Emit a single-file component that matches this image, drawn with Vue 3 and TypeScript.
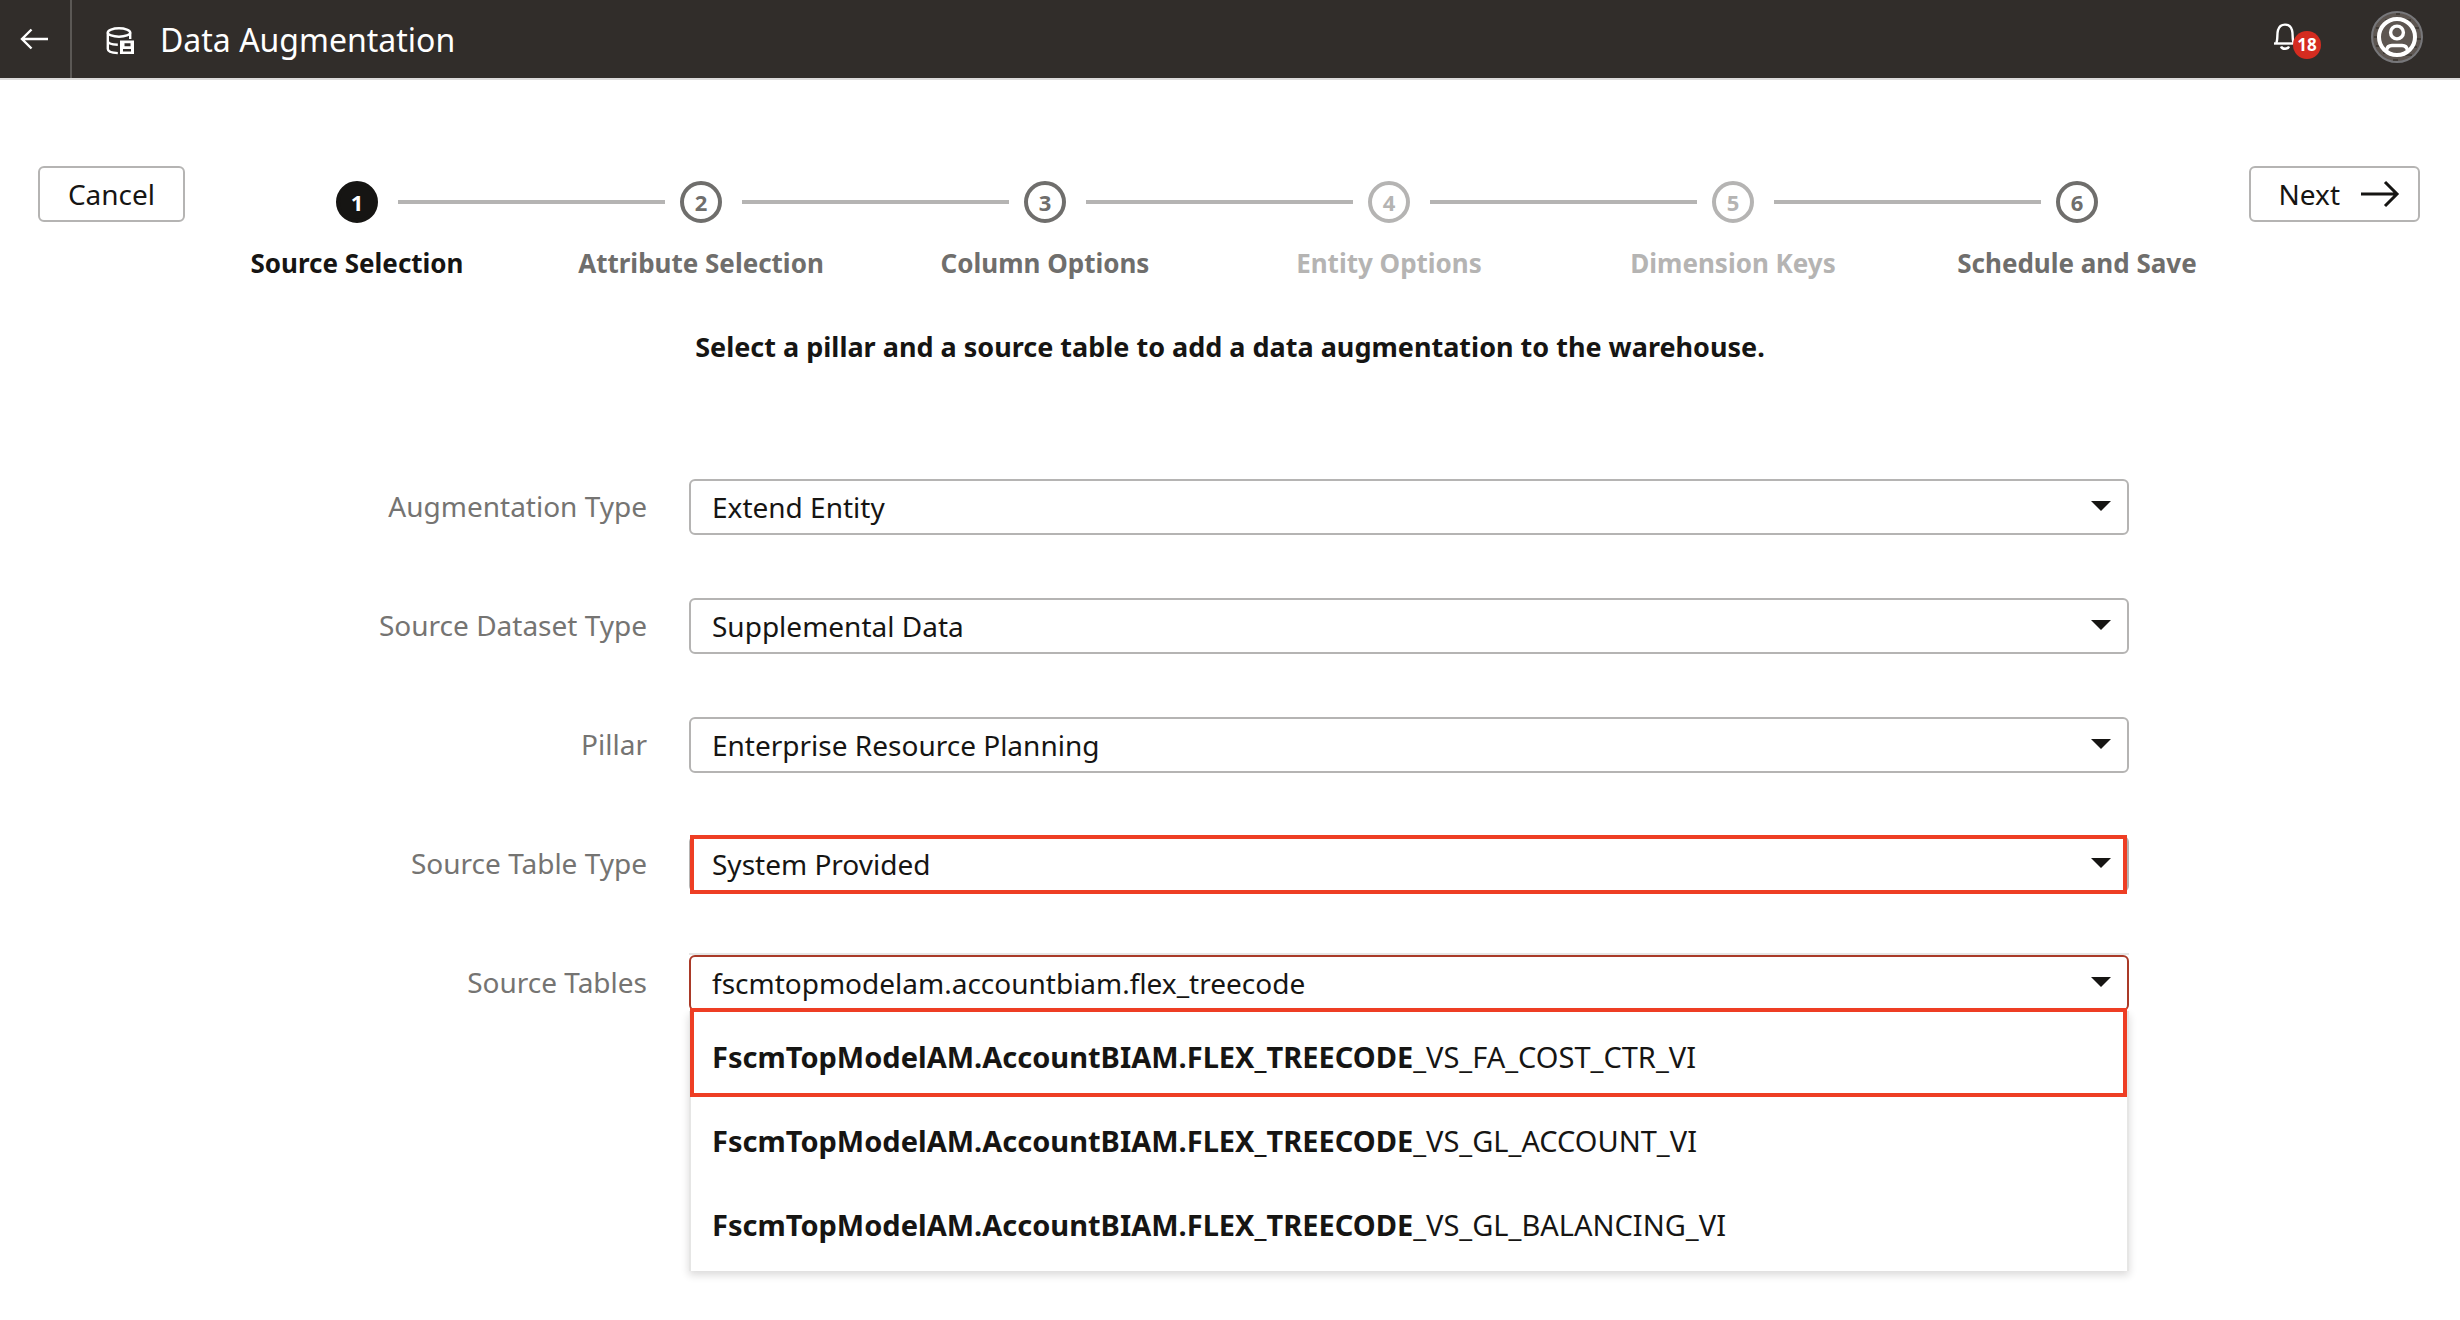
<script setup lang="ts">
import { ref } from 'vue'

type StepState = 'current' | 'open' | 'disabled'

interface Step {
  label: string
  state: StepState
}

interface Field {
  id: string
  label: string
  value: string
  marked?: boolean
}

const steps: Step[] = [
  { label: 'Source Selection', state: 'current' },
  { label: 'Attribute Selection', state: 'open' },
  { label: 'Column Options', state: 'open' },
  { label: 'Entity Options', state: 'disabled' },
  { label: 'Dimension Keys', state: 'disabled' },
  { label: 'Schedule and Save', state: 'open' },
]

const fields: Field[] = [
  { id: 'augmentation-type', label: 'Augmentation Type', value: 'Extend Entity' },
  { id: 'dataset-type', label: 'Source Dataset Type', value: 'Supplemental Data' },
  { id: 'pillar', label: 'Pillar', value: 'Enterprise Resource Planning' },
  { id: 'table-type', label: 'Source Table Type', value: 'System Provided', marked: true },
]

const query = ref('fscmtopmodelam.accountbiam.flex_treecode')
const matched = 'FscmTopModelAM.AccountBIAM.FLEX_TREECODE'
const suffixes = ['_VS_FA_COST_CTR_VI', '_VS_GL_ACCOUNT_VI', '_VS_GL_BALANCING_VI']
</script>

<template>
  <div class="app">
    <header class="topbar">
      <button class="back" type="button" aria-label="Back">
        <svg width="28" height="22" viewBox="0 0 28 22" fill="none" stroke="#fff" stroke-width="2.4">
          <path d="M28 11H2M11.500 1.500L2 11l9.500 9.500" />
        </svg>
      </button>
      <svg class="db" width="28" height="28" viewBox="0 0 28 28" fill="none" stroke="#fff" stroke-width="2.400">
        <ellipse cx="13" cy="5.500" rx="11.200" ry="4.200" />
        <path d="M1.800 5.500V22c0 2.400 4 3.800 10 4.100M1.800 14c0 2.300 4 3.500 10 3.700M24.200 5.500V12" />
        <path fill="#fff" stroke="none" fill-rule="evenodd" d="M14 13.500h14V27H14zM18.500 16.200v3h6v-3zM17 22v2.400h8V22z" />
      </svg>
      <h1>Data Augmentation</h1>
      <button class="bell" type="button" aria-label="Notifications">
        <svg width="24" height="28" viewBox="0 0 24 28" fill="none" stroke="#fff" stroke-width="2.400">
          <path d="M1 20.500h22" />
          <path d="M3.200 20C5 17 3.800 11 5 7.200 6 3.500 8.500 1.600 12 1.600s6 1.900 7 5.600c1.200 3.800 0 9.800 1.800 12.800" />
          <path d="M8 23.500c1 3 7 3 8 0" />
        </svg>
        <span class="badge">18</span>
      </button>
      <button class="avatar" type="button" aria-label="Account">
        <svg width="52" height="52" viewBox="0 0 52 52" fill="none">
          <circle cx="26" cy="26" r="25" fill="#5d5651" stroke="#77777a" stroke-width="2" />
          <path stroke="#39342f" stroke-width="1.400" d="M25 3h4M14 9h6M34 9h6M5 17h5M42 17h6M3 26h3M46 28h4M5 35h6M41 36h5M12 42h6M34 44h7M22 49h5" />
          <circle cx="26" cy="26" r="18" stroke="#fff" stroke-width="4" />
          <circle cx="26" cy="21.500" r="6.400" stroke="#fff" stroke-width="3.400" />
          <path stroke="#fff" stroke-width="3.400" d="M15.500 39.500c.5-3.500 2.500-5 5.500-5h10c3 0 5 1.500 5.500 5" />
        </svg>
      </button>
    </header>

    <main>
      <nav class="wizard" aria-label="Steps">
        <button class="btn cancel" type="button">Cancel</button>
        <ol class="steps">
          <li v-for="(step, i) in steps" :key="step.label" :class="['step', step.state]">
            <span class="dot">{{ i + 1 }}</span>
            <span class="name">{{ step.label }}</span>
          </li>
        </ol>
        <button class="btn next" type="button">
          Next
          <svg width="40" height="28" viewBox="0 0 40 28" fill="none" stroke="#161513" stroke-width="3">
            <path d="M1 14h36M25 2l12 12-12 12" />
          </svg>
        </button>
      </nav>

      <h2>Select a pillar and a source table to add a data augmentation to the warehouse.</h2>

      <form class="form" @submit.prevent>
        <div v-for="field in fields" :key="field.id" class="row">
          <label :for="field.id">{{ field.label }}</label>
          <div :class="['control', { marked: field.marked }]">
            <select :id="field.id">
              <option>{{ field.value }}</option>
            </select>
            <svg class="caret" width="20" height="10" viewBox="0 0 20 10"><path fill="#161513" d="M0 0h20L10 10z" /></svg>
          </div>
        </div>
        <div class="row">
          <label for="source-tables">Source Tables</label>
          <div class="control combo">
            <input id="source-tables" v-model="query" type="text" role="combobox" aria-expanded="true" aria-controls="table-list" autocomplete="off" spellcheck="false" />
            <svg class="caret" width="20" height="10" viewBox="0 0 20 10"><path fill="#161513" d="M0 0h20L10 10z" /></svg>
            <ul id="table-list" class="menu" role="listbox">
              <li v-for="(suffix, i) in suffixes" :key="suffix" role="option" :class="{ picked: i === 0 }">
                <b>{{ matched }}</b>{{ suffix }}
              </li>
            </ul>
          </div>
        </div>
      </form>
    </main>
  </div>
</template>

<style>
body {
  margin: 0;
  background: #fff;
}
</style>

<style scoped>
.app {
  min-height: 100vh;
  font-family: "Noto Sans", "Open Sans", sans-serif;
  font-size: 28px;
  line-height: 38px;
  color: #161513;
}

button,
select,
input {
  font: inherit;
  color: inherit;
}

.topbar {
  display: flex;
  align-items: center;
  box-sizing: border-box;
  height: 80px;
  padding-right: 37px;
  background: #312d2a;
  border-bottom: 2px solid #dcdbda;
  color: #fff;
}

.back,
.bell,
.avatar {
  display: flex;
  padding: 0;
  border: 0;
  background: none;
}

.back {
  align-self: stretch;
  align-items: center;
  justify-content: flex-end;
  box-sizing: border-box;
  width: 72px;
  padding-right: 22px;
  border-right: 2px solid #5b5855;
}

.db {
  margin: 4px 26px 0 34px;
}

h1 {
  flex: 1;
  margin: 0;
  padding-top: 2px;
  font-size: 32px;
  line-height: 44px;
  font-weight: 400;
}

.bell {
  position: relative;
  margin: 0 74px 4px 0;
}

.badge {
  position: absolute;
  left: 20px;
  top: 8px;
  width: 28px;
  border-radius: 14px;
  background: #d42c20;
  font-size: 17px;
  line-height: 28px;
  font-weight: 700;
  text-align: center;
}

.avatar {
  margin-bottom: 4px;
}

.wizard {
  display: flex;
  align-items: flex-start;
  padding: 86px 40px 0 38px;
}

.btn {
  display: flex;
  align-items: center;
  justify-content: center;
  flex: none;
  box-sizing: border-box;
  height: 56px;
  border: 2px solid #b5b4b3;
  border-radius: 6px;
  background: #fff;
}

.cancel {
  width: 147px;
}

.next {
  justify-content: flex-end;
  width: 171px;
  padding: 0 18px 0 0;
  gap: 20px;
}

.steps {
  display: flex;
  flex: 1;
  margin: 0;
  padding: 15px 0 0;
  list-style: none;
}

.step {
  position: relative;
  display: flex;
  flex: 1;
  flex-direction: column;
  align-items: center;
  gap: 21px;
  font-weight: 700;
  color: #6f6e6c;
}

.step:not(:last-child)::after {
  content: "";
  position: absolute;
  top: 19px;
  left: calc(50% + 41px);
  width: calc(100% - 77px);
  height: 4px;
  background: #b5b4b3;
}

.dot {
  box-sizing: border-box;
  width: 42px;
  height: 42px;
  border: 4px solid currentColor;
  border-radius: 50%;
  font-size: 22px;
  line-height: 34px;
  text-align: center;
}

.name {
  font-size: 26px;
  line-height: 38px;
}

.step.current {
  color: #161513;
}

.current .dot {
  border-color: #161513;
  background: #161513;
  color: #fff;
}

.step.disabled {
  color: #b5b4b3;
}

h2 {
  margin: 46px 0 0;
  font-size: 27px;
  line-height: 38px;
  font-weight: 700;
  text-align: center;
}

.form {
  display: flex;
  flex-direction: column;
  gap: 63px;
  margin-top: 113px;
  padding-right: 331px;
}

.row {
  display: grid;
  grid-template-columns: 9fr 20fr;
  column-gap: 41px;
  align-items: start;
}

label {
  padding-right: 1px;
  line-height: 54px;
  text-align: right;
  color: #757472;
}

.control {
  position: relative;
}

select,
input {
  display: block;
  box-sizing: border-box;
  width: 100%;
  height: 56px;
  margin: 0;
  padding: 0 70px 0 21px;
  border: 2px solid #b5b4b3;
  border-radius: 6px;
  outline: 0;
  background: #fff;
  appearance: none;
}

.caret {
  position: absolute;
  top: 22px;
  right: 18px;
}

.marked::after,
.picked::after {
  content: "";
  position: absolute;
  border: 4px solid #ee3e24;
}

.marked::after {
  inset: -1px 2px -2px 1px;
}

.combo::before {
  content: "";
  position: absolute;
  inset: -2px 0 auto;
  height: 2px;
  background: #e6e6e5;
}

.combo input {
  border-color: #aa3a28;
}

.menu {
  margin: 0;
  padding: 4px 0;
  border: solid #e6e6e5;
  border-width: 0 2px;
  background: #fff;
  box-shadow: 0 4px 8px rgba(22, 21, 19, 0.16);
  font-size: 29px;
  list-style: none;
}

.menu li {
  position: relative;
  padding: 23px 21px;
}

.menu .picked::after {
  inset: -7px 0 2px -1px;
}
</style>
